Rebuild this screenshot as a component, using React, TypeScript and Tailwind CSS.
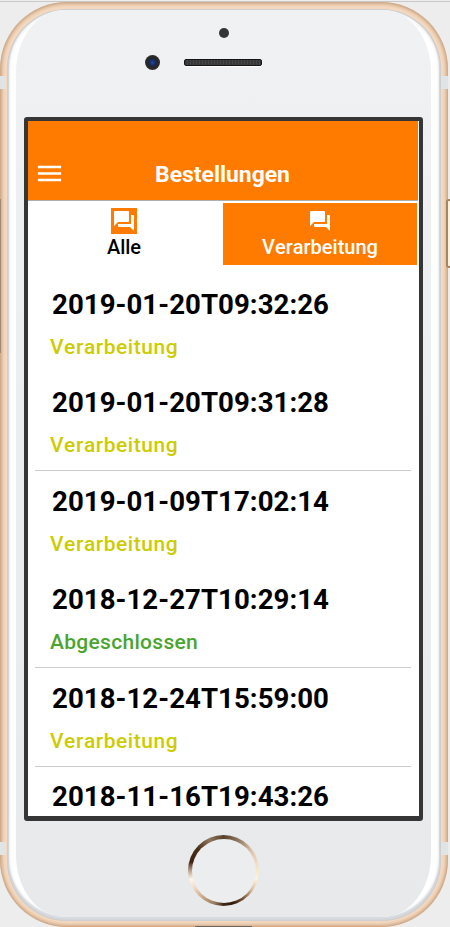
import { MdForum, MdMenu } from 'react-icons/md';

type Order = { date: string; status?: 'Verarbeitung' | 'Abgeschlossen'; divider?: boolean };

const orders: Order[] = [
  { date: '2019-01-20T09:32:26', status: 'Verarbeitung' },
  { date: '2019-01-20T09:31:28', status: 'Verarbeitung', divider: true },
  { date: '2019-01-09T17:02:14', status: 'Verarbeitung' },
  { date: '2018-12-27T10:29:14', status: 'Abgeschlossen', divider: true },
  { date: '2018-12-24T15:59:00', status: 'Verarbeitung', divider: true },
  { date: '2018-11-16T19:43:26' },
];

function Header() {
  return (
    <header className="mr-px h-[80px] border-b border-[#b0adab] bg-[#ff7b00] pt-[37px] text-white">
      <div className="grid h-[31px] grid-cols-[48px_1fr_49px] items-start">
        <MdMenu className="ml-[5.5px] size-[31px]" />
        <h1 className="pt-px text-center text-[22.9px] leading-[31px] font-bold whitespace-nowrap">Bestellungen</h1>
      </div>
    </header>
  );
}

function Tabs() {
  return (
    <nav className="mt-[2px] mr-[2px] flex h-[62px] text-[20px] leading-[24px] font-medium [font-kerning:none]">
      <button className="flex w-[195px] flex-col items-center pt-[5px] pr-[3px] text-black">
        <span className="size-[26px] bg-[#ff7b00] p-px text-white"><MdForum className="size-6" /></span>
        <span className="mt-[1px]">Alle</span>
      </button>
      <button className="flex flex-1 flex-col items-center bg-[#ff7b00] pt-[6px] text-white">
        <MdForum className="size-6" />
        <span className="mt-[2px]">Verarbeitung</span>
      </button>
    </nav>
  );
}

function OrderRow({ date, status, divider }: Order) {
  return (
    <li className={`flex h-[98.5px] shrink-0 flex-col border-b pt-[13.5px] ${divider ? 'border-[#cdcdcd]' : 'border-transparent'}`}>
      <span className="pl-[17px] text-[27.6px] leading-[34px] font-bold tracking-[0.05px] whitespace-nowrap text-black [font-kerning:none]">{date}</span>
      {status && (
        <span className={`mt-[12.4px] pl-[15px] text-[21px] leading-[26px] font-medium [font-kerning:none] ${status === 'Abgeschlossen' ? 'tracking-[0.3px] text-[#4aa52e]' : 'tracking-[0.55px] text-[#cccc00]'}`}>{status}</span>
      )}
    </li>
  );
}

function Screen() {
  return (
    <main className="ml-[8px] h-[704px] w-[399px] overflow-hidden rounded-[3px] border-4 border-b-[5px] border-[#363636] bg-white">
      <Header />
      <Tabs />
      <ul className="mt-[9px] mr-[8px] ml-[7px] flex flex-col">
        {orders.map((o) => <OrderRow key={o.date} {...o} />)}
      </ul>
    </main>
  );
}

function Sensors() {
  return (
    <div className="h-[107px] pt-[18px]">
      <div className="ml-[203px] size-[10px] rounded-full bg-[#353535]" />
      <div className="mt-[17px] ml-[129px] flex items-center gap-[24px]">
        <div className="size-[15px] rounded-full bg-[radial-gradient(circle,#244996_0,#132b6b_3px,#252525_4.5px,#303030_8px)]" />
        <div className="h-[7px] w-[78px] rounded-[2px] border border-[#151515] bg-[repeating-linear-gradient(90deg,#383838_0_2px,#464646_2px_3px)] shadow-[0_1px_0_white]" />
      </div>
    </div>
  );
}

function HomeButton() {
  return (
    <div className="mt-[14px] ml-[172px] size-[71px] rounded-full bg-[conic-gradient(from_0deg,#59402a_0deg,#8d765e_25deg,#dcc4aa_55deg,#f2dfc7_80deg,#fff4d5_105deg,#d7bc9a_125deg,#765236_145deg,#2f1a09_165deg,#3e2817_180deg,#957b60_195deg,#c4a181_215deg,#f1ddc8_240deg,#fff6e9_255deg,#b9a18b_270deg,#3c2411_285deg,#4a2e17_310deg,#8f765e_335deg,#59402a_360deg)] p-[3.5px]">
      <div className="size-full rounded-full bg-[#ecedef]" />
    </div>
  );
}

export default function App() {
  return (
    <div className="relative h-[927px] w-[450px] overflow-hidden bg-[#ededed] pt-[2px] font-[Roboto,sans-serif]">
      <div className="absolute top-px left-0 h-px w-full bg-[#c9c9c9]" />
      <div className="relative h-[925px] w-[448px] rounded-[67px] bg-[#f5d9bf] px-[7px] pt-[7px] pb-[6px] shadow-[inset_0_0_4px_1px_#b58c67]">
        <div className="h-full rounded-[60px] bg-[#d8dbdf] px-[2px] pt-px pb-[4px] shadow-[inset_0_0_3px_#b9b9b9]">
          <div className="h-full rounded-[58px] bg-white pr-[8px] pl-[7px] shadow-[inset_0_0_3px_#d4d7db]">
            <div className="h-full rounded-[48px/62px] bg-linear-to-b from-[#f0f1f3] to-[#e7e9eb]">
              <Sensors />
              <Screen />
              <HomeButton />
            </div>
          </div>
        </div>
      </div>
      <div className="absolute top-[76px] left-0 h-[13px] w-[6px] bg-[#e0e4e4]" />
      <div className="absolute top-[76px] left-[441px] h-[13px] w-[7px] bg-[#e0e4e4]" />
      <div className="absolute top-[842px] left-0 h-[13px] w-[6px] bg-[#e0e4e4]" />
      <div className="absolute top-[842px] left-[441px] h-[13px] w-[7px] bg-[#e0e4e4]" />
      <div className="absolute top-[199px] left-0 h-[154px] w-px bg-[#a18876]" />
      <div className="absolute top-[199px] left-[446px] h-[69px] w-[9px] rounded-[3px] border-2 border-[#a18766] bg-[#fff1df]" />
      <div className="absolute top-[926px] left-[195px] h-px w-[57px] bg-[#71645a]" />
    </div>
  );
}
